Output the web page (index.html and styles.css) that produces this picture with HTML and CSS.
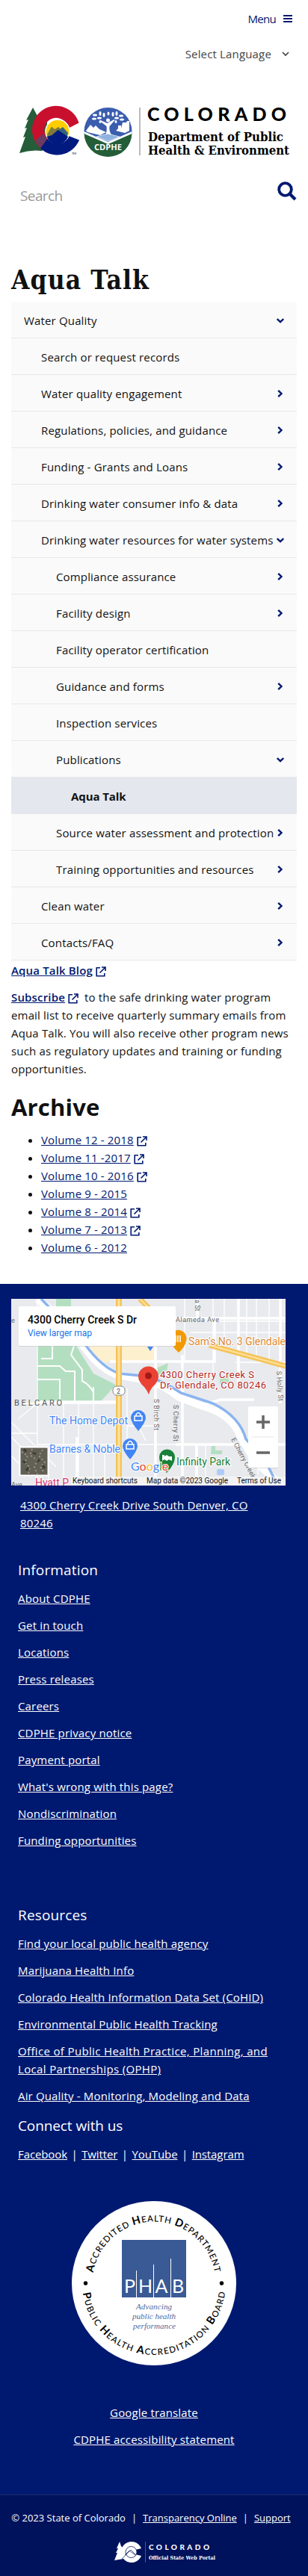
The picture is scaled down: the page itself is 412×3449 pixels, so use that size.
FILE: index.html
```
<!DOCTYPE html>
<html lang="en">
<head>
<meta charset="utf-8">
<title>Aqua Talk | Colorado Department of Public Health &amp; Environment</title>
<link rel="stylesheet" href="styles.css">
</head>
<body>
<svg width="0" height="0" class="defs" aria-hidden="true">
  <symbol id="ext" viewBox="0 0 14 14"><path d="M6 1.800H1.200v11h10.600V9M8 1h5v5M13 1 5.500 8.500" fill="none" stroke="currentColor" stroke-width="1.600"/></symbol>
  <symbol id="right" viewBox="0 0 10 12"><path d="m2.200 1.800 4.300 4.200-4.300 4.200" fill="none" stroke="currentColor" stroke-width="2.400"/></symbol>
  <symbol id="down" viewBox="0 0 10 12"><path d="M.8 4 5 8l4.200-4" fill="none" stroke="currentColor" stroke-width="2.400"/></symbol>
</svg>
<header class="header">
  <a class="menu-toggle" href="#"><span>Menu</span><i class="bars"></i></a>
  <div class="language"><span>Select Language</span><svg width="10" height="7" viewBox="0 0 10 7"><path d="m1 1 4 4 4-4" fill="none" stroke="#444" stroke-width="1.700"/></svg></div>
  <svg class="logo" width="364" height="68" viewBox="24 142 364 68" role="img" aria-label="Colorado Department of Public Health and Environment">
    <path d="m44 144-9 17 3-1-5 12 3-1-5 13 3-1-8 22q15-5 30-3l7-5V160h-6l-6-3z" fill="#245d38"/>
    <path d="M105.500 164.500A32 32 0 1 0 54.500 198.500L66 187A16 16 0 1 1 91 172Z" fill="#c8102e"/>
    <path d="M54 198.500A32 32 0 0 0 106 187.500L92 182H66Z" fill="#001a80"/>
    <path d="M47.500 188 58 179l5 7-9 12.500q-4-4-6.500-10.500z" fill="#6a3c62"/>
    <circle cx="77" cy="176" r="16" fill="#ffcd00" stroke="#fff" stroke-width="1.500"/>
    <path d="m63 180 6-10.500 4 3.500 2-1 3-2 5 4-10 11h-9z" fill="#7c7b3b"/>
    <path d="m78 175 6-5 7 8-2 6z" fill="#35647e"/>
    <path d="m62.500 183 7-2 8-7 13.500 9a15 15 0 0 1-28.500 0z" fill="#001a80"/>
    <text x="96" y="207" class="tm">TM</text>
    <circle cx="144.500" cy="176" r="32" fill="#3a5dae"/>
    <path d="M112.500 178a32 32 0 0 0 64 0l-32 14z" fill="#245d38"/>
    <path d="m112.500 176 32 14 32-14v3l-32 14-32-14z" fill="#fff"/>
    <path d="m115 175 6-8 4 4 3-3 5 5 9 4-8 4-17-4zM155 175l3-3v-4h4v4l2-8h5l1-2h3v13l-6 3z" fill="#fff"/>
    <path d="M140.500 182q3-6 2-13l-9-7 1-1 9 4 9-5 1 1-7 8q-1 8 4 13z" fill="#fff"/>
    <path d="m129 183 15-4 16 4-15 6z" fill="#8fb2e0" stroke="#fff" stroke-width=".7"/>
    <circle cx="144.500" cy="161" r="2.500" fill="#fff"/>
    <g fill="#fff"><ellipse cx="127" cy="154" rx="3" ry="1.500"/><ellipse cx="126" cy="159" rx="3" ry="1.500"/><ellipse cx="134" cy="152" rx="1.500" ry="3"/><ellipse cx="133" cy="158" rx="3" ry="1.500"/><ellipse cx="139" cy="154" rx="1.500" ry="3"/><ellipse cx="145" cy="152" rx="1.500" ry="2.500"/><ellipse cx="151" cy="153" rx="1.500" ry="3"/><ellipse cx="156" cy="152" rx="1.500" ry="3"/><ellipse cx="156" cy="158" rx="3" ry="1.500"/><ellipse cx="162" cy="155" rx="3" ry="1.500"/><ellipse cx="163" cy="160" rx="3" ry="1.500"/><ellipse cx="134" cy="163" rx="1.500" ry="2"/><ellipse cx="155" cy="163" rx="1.500" ry="2"/></g>
    <text x="126" y="201" class="seal-name" textLength="37" lengthAdjust="spacingAndGlyphs">CDPHE</text>
    <path d="M187 144v64" stroke="#777"/>
    <text x="197" y="162" class="state" textLength="186">COLORADO</text>
    <text x="198" y="189" class="dept" textLength="181" lengthAdjust="spacingAndGlyphs">Department of Public</text>
    <text x="198" y="207" class="dept" textLength="189" lengthAdjust="spacingAndGlyphs">Health &amp; Environment</text>
  </svg>
  <div class="search"><span>Search</span><svg width="26" height="26" viewBox="0 0 26 26"><circle cx="10.500" cy="10.500" r="8.300" fill="none" stroke="#001970" stroke-width="3.800"/><path d="m16.500 16.500 7.500 7.500" stroke="#001970" stroke-width="4.200"/></svg></div>
</header>
<main class="main">
  <h1>Aqua Talk</h1>
  <nav class="side-nav">
    <a href="#" class="l1">Water Quality<svg><use href="#down"/></svg></a>
    <a href="#">Search or request records</a>
    <a href="#">Water quality engagement<svg><use href="#right"/></svg></a>
    <a href="#">Regulations, policies, and guidance<svg><use href="#right"/></svg></a>
    <a href="#">Funding - Grants and Loans<svg><use href="#right"/></svg></a>
    <a href="#">Drinking water consumer info &amp; data<svg><use href="#right"/></svg></a>
    <a href="#">Drinking water resources for water systems<svg><use href="#down"/></svg></a>
    <a href="#" class="l3">Compliance assurance<svg><use href="#right"/></svg></a>
    <a href="#" class="l3">Facility design<svg><use href="#right"/></svg></a>
    <a href="#" class="l3">Facility operator certification</a>
    <a href="#" class="l3">Guidance and forms<svg><use href="#right"/></svg></a>
    <a href="#" class="l3">Inspection services</a>
    <a href="#" class="l3">Publications<svg><use href="#down"/></svg></a>
    <a href="#" class="l4 current">Aqua Talk</a>
    <a href="#" class="l3">Source water assessment and protection<svg><use href="#right"/></svg></a>
    <a href="#" class="l3">Training opportunities and resources<svg><use href="#right"/></svg></a>
    <a href="#">Clean water<svg><use href="#right"/></svg></a>
    <a href="#">Contacts/FAQ<svg><use href="#right"/></svg></a>
  </nav>
  <p><a href="#" class="strong">Aqua Talk Blog</a><svg class="ext"><use href="#ext"/></svg></p>
  <p><a href="#" class="strong">Subscribe</a><svg class="ext"><use href="#ext"/></svg>&nbsp; to the safe drinking water program<br>email list to receive quarterly summary emails from<br>Aqua Talk. You will also receive other program news<br>such as regulatory updates and training or funding<br>opportunities.</p>
  <h2>Archive</h2>
  <ul class="archive">
    <li><a href="#">Volume 12 - 2018</a><svg class="ext"><use href="#ext"/></svg></li>
    <li><a href="#">Volume 11 -2017</a><svg class="ext"><use href="#ext"/></svg></li>
    <li><a href="#">Volume 10 - 2016</a><svg class="ext"><use href="#ext"/></svg></li>
    <li><a href="#">Volume 9 - 2015</a></li>
    <li><a href="#">Volume 8 - 2014</a><svg class="ext"><use href="#ext"/></svg></li>
    <li><a href="#">Volume 7 - 2013</a><svg class="ext"><use href="#ext"/></svg></li>
    <li><a href="#">Volume 6 - 2012</a></li>
  </ul>
</main>
<footer class="footer">
  <svg class="map" width="367" height="250" viewBox="0 0 367 250">
    <rect width="367" height="250" fill="#e8eaed"/>
    <path d="M35 60h50l25 40 30 15-20 22H35zM60 0h20v12H60z" fill="#b3dfc0"/>
    <path d="M97 62h96v22h-61l-20 2z" fill="#fdf0cf"/>
    <path d="M196 92l14-6-2 10-12 6zM279 108l12-8v14h-12zM268 197h5v6h9v5h-15z" fill="#b3dfc0"/>
    <g fill="none" stroke="#fff" stroke-width="1.300"><path d="M35 0v250M15 140h125M0 165l60 60M0 185l45 45M0 210l25 25M10 160l25-20M70 140v60M90 140v60M110 140v90M35 195h332M50 205v45M70 205v45M90 205v45M110 205v45M125 205v45M0 180h35M155 120v75M155 170h40"/><path d="M232 0v85M270 0v100M285 0v50M315 0v80M328 0v80M345 0v80M255 30h112M240 45h127M300 85h67M160 150l20 40M260 195v55M330 195v40"/></g>
    <g fill="none" stroke="#fff" stroke-width="3.500"><path d="M132 84h140v-60M220 26h147M249 0v26M193 60v190M229 75v175M304 0v120M35 138h110M220 195h147M248 195v55M360 0v140M88 185v65M250 144l30-9h45"/></g>
    <path d="M35 90h30l8 7h12v40M55 60v20H40M35 108h30v32M85 60l-5 15 15 20v15q10 5 15 15M110 118v20" fill="none" stroke="#fff" stroke-width="2"/>
    <path d="M35 0 65 25 98 65q22 30 45 37l42 8q18 5 40 22l32 12q38 11 49 39l20 34 35 33" fill="none" stroke="#fff" stroke-width="10"/>
    <path d="M40 0 98 60q24 33 47 40l38 4q22 7 44 22l43 14q36 18 44 48l25 27 16 32" fill="none" stroke="#8ab4f0" stroke-width="3.500"/>
    <path d="m172 0 12 12M265 62l102 28" stroke="#f5c35b" stroke-width="7"/><path d="m172 0 12 12M265 62l102 28" stroke="#ffe29a" stroke-width="2"/>
    <path d="M144 0v250" stroke="#f5c35b" stroke-width="8"/><path d="M144 0v250" stroke="#ffe29a" stroke-width="3"/>
    <rect x="136" y="117" width="16" height="12" rx="5" fill="#fff" stroke="#888"/><text x="141" y="127" font-size="9" fill="#555">2</text>
    <g class="street"><text x="220" y="31" textLength="58">Alameda Ave</text><text transform="translate(191 134) rotate(90)" textLength="42">S Birch St</text><text transform="translate(217 142) rotate(90)" textLength="49">S Cherry St</text><text transform="translate(355 97) rotate(86)" textLength="40">S Holly St</text><text transform="translate(246 1) rotate(90)">a St</text><text transform="translate(294 188) rotate(62)" textLength="60">E Cherry Creek</text><text x="0" y="252">Ave</text><text x="0" y="32">e</text></g>
    <text x="4" y="143" class="area" textLength="64">BELCARO</text>
    <g class="poi"><text x="237" y="62" fill="#e08a35" textLength="130">Sam's No. 3 Glendale</text><text x="51" y="168" fill="#4285f4" textLength="105">The Home Depot</text><text x="51" y="206" fill="#4285f4" textLength="95">Barnes &amp; Noble</text><text x="221" y="223" fill="#188038" textLength="72">Infinity Park</text><text x="32" y="251" fill="#d6336c" textLength="45">Hyatt P</text></g>
    <path d="M213 56a11 11 0 1 1 21 0q-1 8-10 16-9-8-11-16" fill="#f29900"/><path d="M220 49v9M223 49v9M226 49v9" stroke="#fff" stroke-width="1.500"/>
    <path d="M160 159a10 10 0 1 1 20 0q0 6-10 18-10-12-10-18M149 197a10 10 0 1 1 20 0q0 6-10 18-10-12-10-18" fill="#4285f4"/>
    <path d="M165 157h10v6h-10zM167 157v-2q3-5 6 0v2M154 195h10v6h-10zM156 195v-2q3-5 6 0v2" fill="none" stroke="#fff" stroke-width="1.500"/>
    <path d="M198 212a10.500 10.500 0 1 1 21 0q0 9-11 21-10-12-10-21" fill="#188038"/><path d="M202 209h3v2l3-2 3 2h4v6l-4-2-3 2-3-2-3 2z" fill="#fff"/>
    <path d="M182 64h8l-4 6z" fill="#4285f4"/>
    <path d="M170 104a13.500 13.500 0 1 1 27 0q0 7-8 14-4 5-5 10-2-5-6-10-8-7-8-14" fill="#ea4335"/><circle cx="183.500" cy="103" r="4.500" fill="#a31913"/>
    <g class="dest"><text x="199" y="106" textLength="126">4300 Cherry Creek S</text><text x="199" y="120" textLength="142">Dr, Glendale, CO 80246</text></g>
    <rect x="275" y="228" width="10" height="8" rx="2" fill="#aecbfa"/>
    <text x="160" y="230" class="google"><tspan fill="#4285f4">G</tspan><tspan fill="#ea4335">o</tspan><tspan fill="#fbbc04">o</tspan><tspan fill="#4285f4">g</tspan><tspan fill="#34a853">l</tspan><tspan fill="#ea4335">e</tspan></text>
    <rect x="80" y="238" width="287" height="12" fill="#f5f5f5" opacity=".8"/>
    <g class="credit"><text x="82" y="247" textLength="87">Keyboard shortcuts</text><text x="181" y="247" textLength="109">Map data ©2023 Google</text><text x="302" y="247" textLength="59">Terms of Use</text></g>
    <rect x="10" y="11" width="210" height="53" rx="2" fill="#bbb" opacity=".5"/><rect x="10" y="10" width="210" height="53" rx="2" fill="#fff"/>
    <text x="22" y="33" class="place" textLength="146">4300 Cherry Creek S Dr</text><text x="22" y="50" class="larger" textLength="86">View larger map</text>
    <rect x="317" y="145" width="40" height="82" rx="2" fill="#bbb" opacity=".5"/><rect x="317" y="144" width="40" height="82" rx="2" fill="#fff"/><path d="M322 185h30" stroke="#e6e6e6"/><path d="M328 165h18M337 156v18M328 206h18" stroke="#666" stroke-width="3.500"/>
    <rect x="11.500" y="198.500" width="38" height="38" rx="1" fill="#625f55" stroke="#fff" stroke-width="2"/><path d="m14 205 8 5-4 9 7 7-2 8M28 201l-3 8 10 7-4 9 4 10M42 202l-5 8 8 9-6 6 5 8" fill="none" stroke="#9c9483" stroke-width="2" stroke-dasharray="2 3"/><path d="m17 201 3 4M38 215l-3 3M20 230l3-4M42 223l3 4M29 206l4 2M16 217l3 3" stroke="#393f35" stroke-width="3"/>
  </svg>
  <p class="address"><a href="#">4300 Cherry Creek Drive South Denver, CO<br>80246</a></p>
  <section class="links info">
    <h3>Information</h3>
    <a href="#">About CDPHE</a><a href="#">Get in touch</a><a href="#">Locations</a><a href="#">Press releases</a><a href="#">Careers</a><a href="#">CDPHE privacy notice</a><a href="#">Payment portal</a><a href="#">What's wrong with this page?</a><a href="#">Nondiscrimination</a><a href="#">Funding opportunities</a>
  </section>
  <section class="links resources">
    <h3>Resources</h3>
    <a href="#">Find your local public health agency</a><a href="#">Marijuana Health Info</a><a href="#">Colorado Health Information Data Set (CoHID)</a><a href="#">Environmental Public Health Tracking</a><a href="#" class="loose">Office of Public Health Practice, Planning, and<br>Local Partnerships (OPHP)</a><a href="#">Air Quality - Monitoring, Modeling and Data</a>
  </section>
  <section class="links connect">
    <h3>Connect with us</h3>
    <p><a href="#">Facebook</a><i>|</i><a href="#">Twitter</a><i>|</i><a href="#">YouTube</a><i>|</i><a href="#">Instagram</a></p>
  </section>
  <svg class="phab" width="220" height="220" viewBox="0 0 220 220">
    <circle cx="110" cy="110" r="110" fill="#fff"/>
    <path id="arcTop" d="M27.500 110a82.500 82.500 0 0 1 165 0" fill="none"/>
    <path id="arcBottom" d="M14 110a96 96 0 0 0 192 0" fill="none"/>
    <g class="ring"><text><textPath href="#arcTop" startOffset="14" textLength="230"><tspan class="cap">A</tspan>CCREDITED <tspan class="cap">H</tspan>EALTH <tspan class="cap">D</tspan>EPARTMENT</textPath></text>
    <text><textPath href="#arcBottom" startOffset="13" textLength="276"><tspan class="cap">P</tspan>UBLIC <tspan class="cap">H</tspan>EALTH <tspan class="cap">A</tspan>CCREDITATION <tspan class="cap">B</tspan>OARD</textPath></text></g>
    <circle cx="18.500" cy="110" r="2.700"/><circle cx="200.500" cy="110" r="2.700"/>
    <rect x="67" y="52" width="86" height="77" fill="#3a5a95"/>
    <path d="M86.500 93v36M109.500 85v44M132.500 77v52" stroke="#fff"/>
    <g class="phab-name"><text x="70" y="123">P</text><text x="89" y="123">H</text><text x="111.500" y="123">A</text><text x="134" y="123">B</text></g>
    <g class="motto"><text x="86" y="145" textLength="48">Advancing</text><text x="81" y="158" textLength="58">public health</text><text x="82" y="171" textLength="57">performance</text></g>
  </svg>
  <div class="extra"><a href="#">Google translate</a><a href="#">CDPHE accessibility statement</a></div>
  <div class="bottom">
    <p><span>© 2023 State of Colorado</span><i>|</i><a href="#">Transparency Online</a><i>|</i><a href="#">Support</a></p>
    <svg width="136" height="28" viewBox="0 0 136 28">
      <path d="M7 0 3 9h2l-3 6h2l-4 10 12-2V9L9 6zM36 9A14 14 0 1 0 36 19L28 17H17V11H28Z" fill="#fff"/><circle cx="22.500" cy="14" r="7.500" fill="#fff" stroke="#00125c" stroke-width=".8"/><path d="m10 23 12-12 7 7M14 18l6-6 8 6" fill="none" stroke="#00125c" stroke-width=".7"/>
      <path d="M41.500 0v28" stroke="#47558f"/><text x="46" y="11" class="state small" textLength="81">COLORADO</text><text x="46" y="24" class="dept small" textLength="89" lengthAdjust="spacingAndGlyphs">Official State Web Portal</text>
    </svg>
  </div>
</footer>
</body>
</html>
```
FILE: styles.css
```
* { box-sizing: border-box; }
body { margin: 0; background: #fff; color: #111; font: 15px/24px "Open Sans", sans-serif; letter-spacing: .16px; }
a { color: #001970; }
svg { display: block; letter-spacing: 0; }
p, h1, h2, h3, ul { margin: 0; }
i { font-style: normal; }
.defs { position: absolute; }
.header { height: 335px; padding: 13px 24px 0; display: flex; flex-direction: column; }
.menu-toggle { display: flex; align-items: center; justify-content: flex-end; gap: 10px; height: 24px; text-decoration: none; margin-right: -3px; letter-spacing: -.7px; }
.bars { width: 12px; height: 10px; border: solid #001970; border-width: 2px 0; background: linear-gradient(#001970, #001970) 0 2px / 12px 2px no-repeat; }
.language { display: flex; align-items: center; justify-content: flex-end; gap: 14px; height: 24px; margin: 23px 1px 0 0; color: #444; }
.logo { margin-top: 58px; overflow: visible; }
.tm { font: 4px Lato, sans-serif; }
.search { display: flex; justify-content: space-between; margin: 33px -9px 0 3px; font-size: 19px; color: #999; }
.search span { padding-top: 7px; letter-spacing: -.6px; }
.state { font: 900 25px Lato, sans-serif; }
.dept { font: bold 17px "DejaVu Serif", serif; }
.seal-name { font: bold 10px "Open Sans", sans-serif; fill: #fff; }
.main { height: 1384px; padding: 15px 15px 0; }
h1 { height: 54px; font: bold 35px/50px "DejaVu Serif Condensed", "DejaVu Serif", serif; font-stretch: condensed; letter-spacing: 1.100px; white-space: nowrap; }
.side-nav { display: flex; flex-direction: column; width: 382px; margin-bottom: 1px; }
.side-nav a { display: flex; justify-content: space-between; align-items: center; height: 49px; padding: 1px 17px 0 40px; border-bottom: 1px solid #e8e8e8; background: #fafafa; color: #111; text-decoration: none; white-space: nowrap; }
.side-nav svg { flex: none; width: 10px; height: 12px; color: #001970; }
.side-nav .l1 { padding-left: 17px; }
.side-nav .l3 { padding-left: 60px; }
.side-nav .l4 { padding-left: 80px; }
.side-nav .current { background: #e5e7ee; font-weight: bold; letter-spacing: -.1px; }
.main p { margin-bottom: 12px; white-space: nowrap; }
.strong { font-weight: 600; }
.ext { display: inline-block; width: 14px; height: 14px; margin-left: 4px; vertical-align: -3px; color: #001970; }
h2 { margin: 19px 0 12px; font: bold 31px/40px "Open Sans", sans-serif; letter-spacing: .2px; }
.archive { padding-left: 40px; }
.footer { height: 1730px; padding-top: 20px; display: flex; flex-direction: column; background: #001970; color: #fff; }
.footer a { color: #fff; }
.map { margin-left: 15px; font-family: Roboto, sans-serif; }
.street { font-size: 9px; fill: #666; }
.area { font-size: 11px; fill: #555; }
.poi { font-size: 14px; stroke: #fff; stroke-width: 2px; paint-order: stroke; }
.dest { font-size: 13px; fill: #b3261e; stroke: #fff; stroke-width: 2px; paint-order: stroke; }
.google { font: 16px Lato, sans-serif; stroke: #fff; stroke-width: 2px; paint-order: stroke; }
.credit { font-size: 10px; fill: #111; }
.place { font-size: 14px; font-weight: 500; }
.larger { font-size: 12px; fill: #1a73e8; }
.address { margin: 14px 27px 0; white-space: nowrap; }
.links { display: flex; flex-direction: column; align-items: flex-start; gap: 12px; padding: 0 24px; white-space: nowrap; }
.links h3 { font: 19px/28px "Open Sans", sans-serif; }
.links i { margin: 0 5.500px; }
.loose { letter-spacing: .35px; }
.info { margin-top: 37px; }
.resources { margin-top: 74px; }
.connect { margin-top: 14px; letter-spacing: -.1px; }
.phab { margin: 51px auto 0; }
.ring { font: 500 11.500px Lato, sans-serif; }
.cap { font-size: 14.500px; font-weight: bold; }
.phab-name { font: 25px Lato, sans-serif; fill: #fff; }
.motto { font: italic 11px "Liberation Serif", serif; fill: #53699d; }
.extra { display: flex; flex-direction: column; align-items: center; gap: 12px; margin-top: 51px; }
.bottom { display: flex; flex-direction: column; align-items: center; margin-top: auto; height: 110px; padding-top: 18px; border-top: 2px solid #10246d; background: #00125c; font-size: 13px; letter-spacing: 0; }
.bottom p { display: flex; gap: 8px; white-space: nowrap; margin-right: 8px; }
.bottom svg { margin-top: 20px; margin-left: 30px; overflow: visible; }
.small.state { font-size: 10px; fill: #fff; }
.small.dept { font-size: 7px; fill: #fff; }
```
